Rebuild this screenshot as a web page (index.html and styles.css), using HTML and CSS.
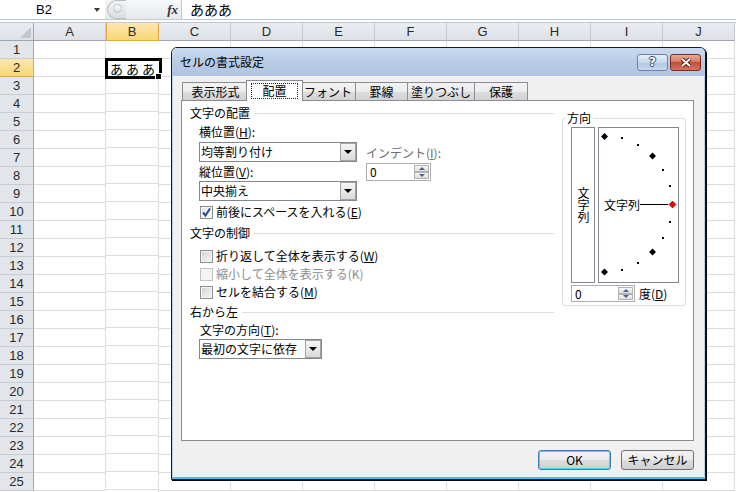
FILE: index.html
```html
<!DOCTYPE html>
<html lang="ja">
<head>
<meta charset="utf-8">
<title>セルの書式設定</title>
<link rel="stylesheet" href="styles.css">
</head>
<body>
<div class="fbar">
  <div class="namebox"><span class="nb-text">B2</span><span class="nb-arrow"></span></div>
  <div class="fxzone">
    <span class="handle2"><i></i></span>
    <span class="fx">fx</span>
  </div>
  <div class="formula">あああ</div>
</div>
<div class="fstrip"></div>
<div class="sheet">
  <div class="rh">
    <div class="corner"><span class="tri"></span></div>
    <div class="rn">1</div><div class="rn sel">2</div><div class="rn">3</div><div class="rn">4</div><div class="rn">5</div>
    <div class="rn">6</div><div class="rn">7</div><div class="rn">8</div><div class="rn">9</div><div class="rn">10</div>
    <div class="rn">11</div><div class="rn">12</div><div class="rn">13</div><div class="rn">14</div><div class="rn">15</div>
    <div class="rn">16</div><div class="rn">17</div><div class="rn">18</div><div class="rn">19</div><div class="rn">20</div>
    <div class="rn">21</div><div class="rn">22</div><div class="rn">23</div><div class="rn">24</div><div class="rn">25</div>
  </div>
  <div class="col w72"><div class="ch">A</div><div class="cb"></div></div>
  <div class="col w53"><div class="ch sel">B</div><div class="cb"><div class="selbox"><span>あ</span><span>あ</span><span>あ</span><i class="fh"></i></div></div></div>
  <div class="col w72"><div class="ch">C</div><div class="cb"></div></div>
  <div class="col w72"><div class="ch">D</div><div class="cb"></div></div>
  <div class="col w72"><div class="ch">E</div><div class="cb"></div></div>
  <div class="col w72"><div class="ch">F</div><div class="cb"></div></div>
  <div class="col w72"><div class="ch">G</div><div class="cb"></div></div>
  <div class="col w72"><div class="ch">H</div><div class="cb"></div></div>
  <div class="col w72"><div class="ch">I</div><div class="cb"></div></div>
  <div class="col w72"><div class="ch">J</div><div class="cb"></div></div>
</div>

<div class="dialog">
  <div class="titlebar">
    <span class="title">セルの書式設定</span>
    <div class="tbtns">
      <span class="tbtn help">?</span>
      <span class="tbtn close"><svg width="14" height="11" viewBox="0 0 14 11"><path d="M3 2 L11 9 M11 2 L3 9" stroke="#5a1f14" stroke-width="4"/><path d="M3 2 L11 9 M11 2 L3 9" stroke="#fff" stroke-width="2"/></svg></span>
    </div>
  </div>
  <div class="dbody">
    <div class="tabs">
      <span class="tab t1">表示形式</span>
      <span class="tab t2 active"><span class="focus">配置</span></span>
      <span class="tab t3">フォント</span>
      <span class="tab t4">罫線</span>
      <span class="tab t5">塗りつぶし</span>
      <span class="tab t6">保護</span>
    </div>
    <div class="panel">
      <div class="pleft">
        <div class="sec"><span>文字の配置</span><i></i></div>
        <div class="lbl l1">横位置(<u>H</u>):</div>
        <div class="posrow">
          <div class="poscol">
            <div class="combo"><span class="cv">均等割り付け</span><span class="cbtn"><i></i></span></div>
            <div class="lbl2">縦位置(<u>V</u>):</div>
            <div class="combo"><span class="cv">中央揃え</span><span class="cbtn"><i></i></span></div>
          </div>
          <div class="indcol">
            <div class="lbl gray">インデント(<u>I</u>):</div>
            <div class="spin"><span class="sv">0</span><span class="sbtns"><span class="sb"><i class="up"></i></span><span class="sb"><i class="dn"></i></span></span></div>
          </div>
        </div>
        <div class="chk c0"><span class="box on"><svg width="11" height="11" viewBox="0 0 11 11"><path d="M2 5.5 L4.5 8.5 L9 1.5" fill="none" stroke="#2b4a8e" stroke-width="2"/></svg></span><span>前後にスペースを入れる(<u>E</u>)</span></div>
        <div class="sec s2"><span>文字の制御</span><i></i></div>
        <div class="chk c1"><span class="box"></span><span>折り返して全体を表示する(<u>W</u>)</span></div>
        <div class="chk c2 dis"><span class="box"></span><span>縮小して全体を表示する(K)</span></div>
        <div class="chk c2"><span class="box"></span><span>セルを結合する(<u>M</u>)</span></div>
        <div class="sec s3"><span>右から左</span><i></i></div>
        <div class="lbl l3">文字の方向(<u>T</u>):</div>
        <div class="combo c3w"><span class="cv">最初の文字に依存</span><span class="cbtn"><i></i></span></div>
      </div>
      <div class="group">
        <div class="legend">方向</div>
        <div class="orient">
          <div class="vbox"><span class="vt">文字列</span></div>
          <div class="dial">
            <svg width="81" height="156" viewBox="0 0 81 156">
              <g fill="#000">
                <polygon points="6.5,6 10,9.5 6.5,13 3,9.5"/>
                <rect x="23" y="10" width="2" height="2"/>
                <rect x="39" y="17" width="2" height="2"/>
                <polygon points="54.5,25.5 58,29 54.5,32.5 51,29"/>
                <rect x="64" y="42" width="2" height="2"/>
                <rect x="71" y="58" width="2" height="2"/>
                <rect x="71" y="94" width="2" height="2"/>
                <rect x="64" y="110" width="2" height="2"/>
                <polygon points="54.5,121.5 58,125 54.5,128.5 51,125"/>
                <rect x="39" y="135" width="2" height="2"/>
                <rect x="23" y="142" width="2" height="2"/>
                <polygon points="6.5,141.5 10,145 6.5,148.5 3,145"/>
              </g>
              <text x="6" y="77" dominant-baseline="central" font-size="12" font-family="Noto Sans CJK JP, sans-serif">文字列</text>
              <line x1="42" y1="77.5" x2="70" y2="77.5" stroke="#000" stroke-width="1"/>
              <polygon points="74.5,74 78,77.5 74.5,81 71,77.5" fill="#f00000" stroke="#8a0000" stroke-width="0.6"/>
            </svg>
          </div>
        </div>
        <div class="degrow">
          <div class="spin dspin"><span class="sv">0</span><span class="sbtns"><span class="sb"><i class="up"></i></span><span class="sb"><i class="dn"></i></span></span></div>
          <span class="deg">度(<u>D</u>)</span>
        </div>
      </div>
    </div>
    <div class="btnrow"><span class="btn ok">OK</span><span class="btn">キャンセル</span></div>
  </div>
</div>
</body>
</html>
```
FILE: styles.css
```css
* { box-sizing: border-box; }
html, body { margin: 0; padding: 0; }
body {
  width: 736px; height: 492px; overflow: hidden; position: relative; background: #fff;
  font-family: "Noto Sans CJK JP", "Noto Sans", "DejaVu Sans", sans-serif;
  font-size: 12px; color: #000;
}
u { text-decoration: underline; text-underline-offset: 1px; }

/* formula bar */
.fbar { display: flex; height: 20px; border-bottom: 1px solid #c3c8ce; }
.namebox { width: 105px; display: flex; align-items: center; background: #fff; }
.nb-text { width: 88px; text-align: center; font-family: "Liberation Sans", sans-serif; font-size: 13px; line-height: 19px; }
.nb-arrow { margin-left: 6px; width: 0; height: 0; border-left: 3px solid transparent; border-right: 3px solid transparent; border-top: 4px solid #3a3a3a; }
.fxzone { width: 77px; display: flex; align-items: stretch; background: linear-gradient(#f7f8f9, #e6e8eb); border-right: 1px solid #c3c8ce; }
.handle2 { width: 19px; margin-left: 2px; border: 1px solid #b8bdc4; border-right: none; border-radius: 10px 0 0 10px; background: linear-gradient(#f0f2f4, #dadde2); display: flex; align-items: center; justify-content: center; }
.handle2 i { width: 9px; height: 9px; margin-top: -3px; border-radius: 50%; background: linear-gradient(#fdfdfd, #d9dce0); border: 1px solid #c2c6cb; }
.fx { margin-left: auto; margin-right: 3px; font-family: "Liberation Serif", serif; font-style: italic; font-weight: bold; font-size: 13px; line-height: 19px; color: #333; }
.formula { flex: 1; padding-left: 8px; font-size: 14px; line-height: 19px; }
.fstrip { height: 3px; background: #fff; border-bottom: 1px solid #c3c8ce; }

/* sheet */
.sheet { display: flex; }
.rh { width: 34px; flex: none; }
.corner { height: 18px; background: linear-gradient(#eaedf1, #dde1e6); border-right: 1px solid #9ea6af; border-bottom: 1px solid #9ea6af; display: flex; justify-content: flex-end; align-items: flex-end; padding: 0 2px 2px 0; }
.tri { width: 0; height: 0; border-left: 11px solid transparent; border-bottom: 11px solid #c2c6cc; }
.rn { height: 18px; background: #e2e5ea; border-right: 1px solid #9ea6af; border-bottom: 1px solid #c8cdd3; text-align: center; font-family: "Liberation Sans", sans-serif; font-size: 13px; line-height: 17px; color: #2a2a2a; }
.rn.sel { background: linear-gradient(#fbe6b2, #f9d775); border-bottom-color: #e2a94a; border-right-color: #e2a94a; }
.col { flex: none; }
.w72 { width: 72px; }
.w53 { width: 53px; }
.ch { height: 18px; background: linear-gradient(#eaedf1, #dde1e6); border-right: 1px solid #c5cad1; border-bottom: 1px solid #9ea6af; text-align: center; font-family: "Liberation Sans", sans-serif; font-size: 13px; line-height: 17px; color: #2a2a2a; }
.ch.sel { background: linear-gradient(#fbe6b2, #f9d775); border-right-color: #e2a94a; border-bottom-color: #e2a94a; box-shadow: inset 1px 0 0 #e2a94a; }
.cb { height: 450px; border-right: 1px solid #dadcdd; background: repeating-linear-gradient(to bottom, transparent 0 17px, #dadcdd 17px 18px); }
.selbox { position: relative; z-index: 1; margin: 17px 0 0 -1px; width: 57px; height: 21px; border: 3px solid #000; background: #fff; display: flex; justify-content: space-between; align-items: center; padding: 0 4px 0 2px; font-size: 13px; line-height: 15px; }
.fh { position: absolute; right: -3px; bottom: -4px; width: 7px; height: 7px; background: #000; border: 1px solid #fff; }

/* dialog */
.dialog { position: absolute; left: 171px; top: 47px; width: 535px; height: 433px; border: 1px solid #1c1c1c; border-radius: 6px 6px 0 0; background: #f0f0f0; display: flex; flex-direction: column; box-shadow: 1px 1px 0 #000; z-index: 5; }
.titlebar { height: 28px; flex: none; display: flex; align-items: flex-start; padding: 0 4px 0 8px; border-radius: 5px 5px 0 0; background: linear-gradient(#c9daef, #b8cce7 50%, #afc5e3); }
.title { line-height: 28px; font-size: 12px; }
.tbtns { margin-left: auto; margin-top: 6px; display: flex; gap: 2px; }
.tbtn { width: 31px; height: 17px; border-radius: 3px; display: flex; align-items: center; justify-content: center; }
.help { border: 1px solid #6f83a3; background: linear-gradient(#e6eef8, #c8d8ec 50%, #b3c7e2 51%, #c6d8ef); color: #fff; font-family: "DejaVu Sans", sans-serif; font-weight: bold; font-size: 12px; line-height: 15px; text-shadow: 1px 0 0 #34476a, -1px 0 0 #34476a, 0 1px 0 #34476a, 0 -1px 0 #34476a; }
.close { border: 1px solid #7a2a1e; background: linear-gradient(#e9ab9c, #d67a67 45%, #c54e36 50%, #d47560); }

.dbody { flex: 1; display: flex; flex-direction: column; border-left: 1px solid #b9cfe9; border-right: 1px solid #b9cfe9; border-bottom: 2px solid #46bfe6; padding: 4px 10px 0 8px; }
.tabs { display: flex; align-items: flex-end; height: 20px; margin-left: 1px; }
.tab { height: 18px; margin-left: -1px; border: 1px solid #898c95; border-bottom: none; background: linear-gradient(#f3f3f3, #ebebeb 50%, #dddddd 51%, #d3d3d3); text-align: center; line-height: 17px; font-size: 12px; }
.tab:first-child { margin-left: 0; }
.t1 { width: 67px; }
.t2 { width: 57px; }
.t3 { width: 56px; }
.t4 { width: 53px; }
.t5 { width: 68px; }
.t6 { width: 54px; }
.tab.active { height: 21px; margin: 0 -2px -1px -3px; background: #fff; position: relative; z-index: 1; padding-top: 2px; display: flex; justify-content: center; align-items: flex-start; }
.focus { width: 47px; height: 16px; border: 1px dotted #222; line-height: 14px; text-align: center; }

.panel { height: 341px; flex: none; border: 1px solid #898c95; background: #fff; display: flex; align-items: flex-start; padding: 4px 7px 0 8px; }
.pleft { width: 364px; flex: none; display: flex; flex-direction: column; }
.sec { display: flex; align-items: center; height: 16px; line-height: 16px; }
.sec i { flex: 1; height: 1px; background: #d5dfe5; margin-left: 4px; }
.s2 { margin-top: 5px; }
.s3 { margin-top: 4px; }
.lbl { height: 16px; line-height: 16px; }
.l1 { margin-top: 3px; padding-left: 9px; }
.l3 { margin-top: 2px; padding-left: 10px; }
.gray { color: #6d6d6d; }
.posrow { display: flex; margin-top: 2px; padding-left: 9px; }
.poscol { width: 158px; display: flex; flex-direction: column; }
.lbl2 { height: 19px; line-height: 19px; }
.combo { height: 20px; border: 1px solid #828790; background: #fff; display: flex; align-items: stretch; padding: 0 0 0 1px; }
.cv { flex: 1; line-height: 18px; }
.cbtn { width: 16px; border: 1px solid #a3a3a3; background: linear-gradient(#f6f6f6, #dadada); display: flex; align-items: center; justify-content: center; }
.cbtn i { width: 0; height: 0; border-left: 4px solid transparent; border-right: 4px solid transparent; border-top: 4px solid #000; }
.c3w { width: 123px; margin: 1px 0 0 9px; }
.indcol { margin-left: 9px; display: flex; flex-direction: column; }
.indcol .lbl { margin-top: 3px; }
.spin { height: 18px; border: 1px solid #abadb3; background: #fff; display: flex; }
.indcol .spin { margin-top: 2px; width: 65px; }
.sv { flex: 1; padding-left: 3px; line-height: 16px; }
.sbtns { width: 16px; display: flex; flex-direction: column; padding: 1px 1px 1px 0; }
.sb { flex: 1; border: 1px solid #b1b1b1; background: linear-gradient(#f7f7f7, #dedede); display: flex; align-items: center; justify-content: center; }
.sb i { width: 0; height: 0; border-left: 3px solid transparent; border-right: 3px solid transparent; }
.sb i.up { border-bottom: 3px solid #4c5f8c; }
.sb i.dn { border-top: 3px solid #4c5f8c; }

.chk { display: flex; align-items: center; height: 16px; line-height: 16px; padding-left: 10px; }
.box { width: 13px; height: 13px; flex: none; margin-right: 3px; border: 1px solid #8e8f8f; background: linear-gradient(135deg, #cfd2d6, #f7f7f7); box-shadow: inset 0 0 0 1px #f4f4f4; display: flex; align-items: center; justify-content: center; }
.box.on { background: linear-gradient(135deg, #e3e5e8, #fbfbfb); }
.c0 { margin-top: 3px; }
.c1 { margin-top: 7px; }
.c2 { margin-top: 2px; }
.dis { color: #8d8d8d; }
.dis .box { border-color: #c4c4c4; background: #f4f4f4; box-shadow: none; }

.group { margin: 13px 0 0 8px; width: 124px; height: 188px; flex: none; border: 1px solid #d5dfe5; border-radius: 3px; padding: 0 6px 0 8px; display: flex; flex-direction: column; }
.legend { margin: -9px 0 0 -6px; padding: 0 2px; background: #fff; align-self: flex-start; height: 16px; line-height: 16px; }
.orient { display: flex; gap: 3px; height: 156px; margin-top: 1px; }
.vbox { width: 24px; border: 1px solid #828790; display: flex; align-items: center; justify-content: center; }
.vt { writing-mode: vertical-rl; text-orientation: upright; line-height: 12px; letter-spacing: 0; }
.dial { width: 81px; border: 1px solid #828790; position: relative; }
.dial svg { position: absolute; left: -1px; top: -1px; }
.degrow { display: flex; align-items: center; margin-top: 2px; }
.dspin { width: 64px; height: 17px; }
.dspin .sv { line-height: 15px; }
.deg { margin-left: 4px; line-height: 16px; }

.btnrow { display: flex; justify-content: flex-end; gap: 10px; margin-top: 9px; }
.btn { width: 73px; height: 20px; border: 1px solid #707070; border-radius: 3px; background: linear-gradient(#f2f2f2, #ebebeb 50%, #dddddd 51%, #cfcfcf); text-align: center; line-height: 18px; font-size: 12px; }
.btn.ok { border-color: #3c7fb1; box-shadow: inset 0 0 0 1px #48d3f8; }
```
